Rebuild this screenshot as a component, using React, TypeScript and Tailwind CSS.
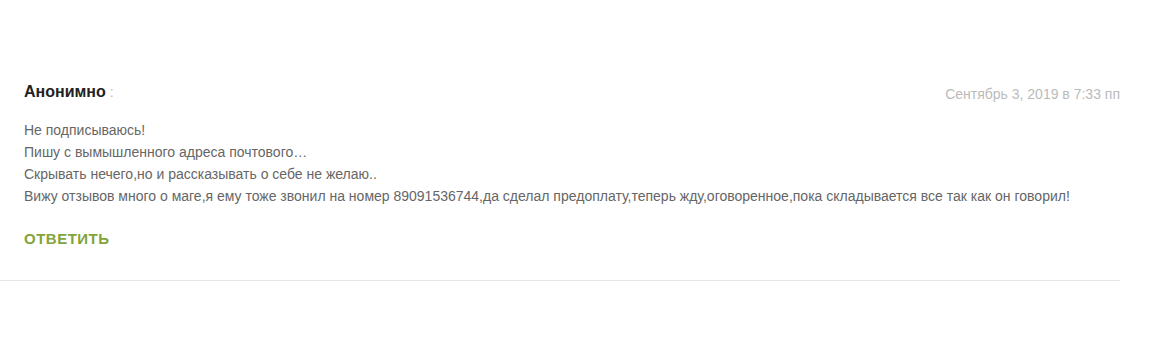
import React from "react";

export default function App() {
  return (
    <div className="w-[1162px] h-[360px] bg-white" style={{ fontFamily: '"Liberation Sans", Arial, sans-serif' }}>
      <div className="w-[1120px] pt-[82px]">
        <div className="pl-6 pb-[31px] border-b border-[#e6e6e6]">
          <div className="flex items-baseline justify-between">
            <div className="text-[16px] leading-[20px]">
              <span className="font-bold text-[#222]">Анонимно</span>
              <span className="text-[14px] text-[#bbb]"> :</span>
            </div>
            <div className="relative top-[2px] text-[14px] text-[#bbb]">Сентябрь 3, 2019 в 7:33 пп</div>
          </div>
          <div className="mt-[16px] text-[14px] leading-[22px] text-[#666]">
            <p>Не подписываюсь!</p>
            <p>Пишу с вымышленного адреса почтового…</p>
            <p>Скрывать нечего,но и рассказывать о себе не желаю..</p>
            <p>Вижу отзывов много о маге,я ему тоже звонил на номер 89091536744,да сделал предоплату,теперь жду,оговоренное,пока складывается все так как он говорил!</p>
          </div>
          <div className="mt-[22px] text-[15px] leading-[20px] font-bold tracking-[0.5px] text-[#82a43a]">ОТВЕТИТЬ</div>
        </div>
      </div>
    </div>
  );
}
